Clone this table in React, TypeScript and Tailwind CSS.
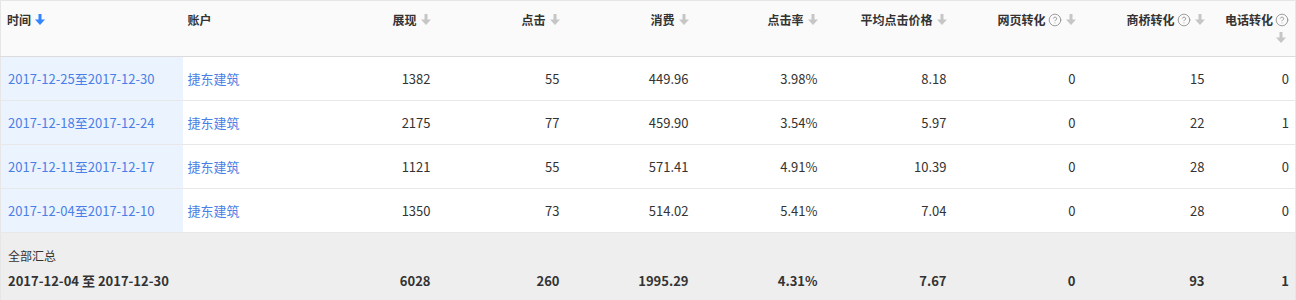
import React from 'react';
import { CircleHelp } from 'lucide-react';

type Row = {
  range: string;
  account: string;
  show: string;
  click: string;
  cost: string;
  ctr: string;
  cpc: string;
  web: string;
  bridge: string;
  phone: string;
};

const rows: Row[] = [
  { range: '2017-12-25至2017-12-30', account: '捷东建筑', show: '1382', click: '55', cost: '449.96', ctr: '3.98%', cpc: '8.18', web: '0', bridge: '15', phone: '0' },
  { range: '2017-12-18至2017-12-24', account: '捷东建筑', show: '2175', click: '77', cost: '459.90', ctr: '3.54%', cpc: '5.97', web: '0', bridge: '22', phone: '1' },
  { range: '2017-12-11至2017-12-17', account: '捷东建筑', show: '1121', click: '55', cost: '571.41', ctr: '4.91%', cpc: '10.39', web: '0', bridge: '28', phone: '0' },
  { range: '2017-12-04至2017-12-10', account: '捷东建筑', show: '1350', click: '73', cost: '514.02', ctr: '5.41%', cpc: '7.04', web: '0', bridge: '28', phone: '0' },
];

const font = { fontFamily: '"Noto Sans CJK SC", "Noto Sans", sans-serif' };

function SortArrow({ active }: { active?: boolean }) {
  return (
    <svg width="10" height="12" viewBox="0 0 10 12" className="inline-block align-[-1px]">
      <rect x="3.5" y="0" width="3" height="6" fill={active ? '#3385ff' : '#c6c6c6'} />
      <polygon points="0,5.5 10,5.5 5,11" fill={active ? '#3385ff' : '#c6c6c6'} />
    </svg>
  );
}

function Help() {
  return <CircleHelp size={14} strokeWidth={1.4} className="inline-block align-[-2px] text-[#8a8a8a] ml-[2px]" />;
}

function Th({ label, help, active, left }: { label: string; help?: boolean; active?: boolean; left?: boolean }) {
  return (
    <th
      className={`align-top pt-[10px] pb-0 px-[6px] text-[12px] leading-[18px] font-bold text-[#333] border-b border-[#dcdcdc] whitespace-nowrap ${
        left ? 'text-left' : 'text-right'
      }`}
    >
      {label}
      {help && <Help />}
      <span className="ml-[4px]">
        <SortArrow active={active} />
      </span>
    </th>
  );
}

export default function App() {
  const num = 'px-[6px] text-right text-[13px] text-[#333]';
  return (
    <div className="w-[1296px] h-[300px] overflow-hidden bg-white" style={font}>
      <table className="table-fixed border-collapse w-[1295px] border border-[#e6e6e6]">
        <colgroup>
          <col className="w-[182px]" />
          <col className="w-[125px]" />
          <col className="w-[129px]" />
          <col className="w-[129px]" />
          <col className="w-[129px]" />
          <col className="w-[129px]" />
          <col className="w-[129px]" />
          <col className="w-[129px]" />
          <col className="w-[129px]" />
          <col className="w-[85px]" />
        </colgroup>
        <thead>
          <tr className="h-[56px] bg-[#fafafa]">
            <Th label="时间" active left />
            <th className="align-top pt-[10px] px-[5px] text-left text-[12px] leading-[18px] font-bold text-[#333] border-b border-[#dcdcdc]">
              账户
            </th>
            <Th label="展现" />
            <Th label="点击" />
            <Th label="消费" />
            <Th label="点击率" />
            <Th label="平均点击价格" />
            <Th label="网页转化" help />
            <Th label="商桥转化" help />
            <th className="align-top pt-[10px] px-[6px] text-right text-[12px] leading-[18px] font-bold text-[#333] border-b border-[#dcdcdc] whitespace-nowrap">
              电话转化
              <Help />
              <div className="pr-[3px]">
                <SortArrow />
              </div>
            </th>
          </tr>
        </thead>
        <tbody>
          {rows.map((r) => (
            <tr key={r.range} className="h-[44px] border-b border-[#e8e8e8]">
              <td className="bg-[#ebf3fe] px-[7px] text-[13px] text-[#4a7fe6] whitespace-nowrap">{r.range}</td>
              <td className="px-[5px] text-[13px] text-[#4a7fe6] whitespace-nowrap">{r.account}</td>
              <td className={num}>{r.show}</td>
              <td className={num}>{r.click}</td>
              <td className={num}>{r.cost}</td>
              <td className={num}>{r.ctr}</td>
              <td className={num}>{r.cpc}</td>
              <td className={num}>{r.web}</td>
              <td className={num}>{r.bridge}</td>
              <td className={num}>{r.phone}</td>
            </tr>
          ))}
          <tr className="bg-[#eeeeee] h-[70px]">
            <td className="px-[7px] pt-[10px] align-top whitespace-nowrap text-[#333]">
              <div className="text-[12px] leading-[25px]">全部汇总</div>
              <div className="text-[13px] leading-[25px] font-bold">2017-12-04 至 2017-12-30</div>
            </td>
            <td />
            {['6028', '260', '1995.29', '4.31%', '7.67', '0', '93', '1'].map((v, i) => (
              <td key={i} className="px-[6px] pt-[35px] align-top text-right text-[13px] leading-[25px] font-bold text-[#333]">
                {v}
              </td>
            ))}
          </tr>
        </tbody>
      </table>
    </div>
  );
}
